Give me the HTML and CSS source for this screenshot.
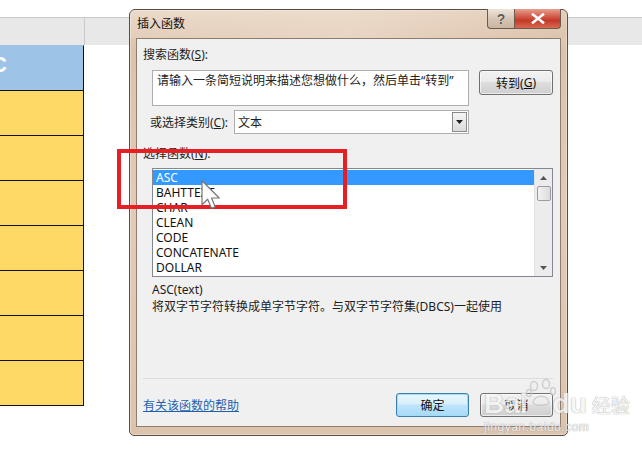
FILE: index.html
```html
<!DOCTYPE html>
<html lang="zh-CN">
<head>
<meta charset="utf-8">
<title>插入函数</title>
<link rel="stylesheet" href="styles.css">
</head>
<body>
<div class="sheet">
  <div class="colhdr"><div class="colhdr-cell"></div></div>
  <div class="cells">
    <div class="cell blue"><span class="colname">C</span></div>
    <div class="cell yellow"></div>
    <div class="cell yellow"></div>
    <div class="cell yellow"></div>
    <div class="cell yellow"></div>
    <div class="cell yellow"></div>
    <div class="cell yellow"></div>
    <div class="cell yellow"></div>
  </div>
</div>

<div class="dialog">
  <div class="titlebar">
    <span class="title">插入函数</span>
    <div class="ctrls">
      <span class="ctrl help">?</span>
      <span class="ctrl close">
        <svg width="14" height="11" viewBox="0 0 14 11"><path d="M2 1.5 L12 9.5 M12 1.5 L2 9.5" stroke="#fff" stroke-width="2.6" stroke-linecap="square"/></svg>
      </span>
    </div>
  </div>
  <div class="panel">
    <div class="lbl lbl-search">搜索函数(<u>S</u>):</div>
    <div class="search-row">
      <div class="search-box">请输入一条简短说明来描述您想做什么，然后单击“转到”</div>
      <div class="btn go">转到(<u>G</u>)</div>
    </div>
    <div class="cat-row">
      <span class="cat-lbl">或选择类别(<u>C</u>):</span>
      <div class="select"><span>文本</span><span class="drop"><svg width="7" height="4" viewBox="0 0 7 4"><path d="M0 0 H7 L3.5 4 Z" fill="#222"/></svg></span></div>
    </div>
    <div class="lbl lbl-func">选择函数(<u>N</u>):</div>
    <div class="list">
      <ul class="items">
        <li class="sel">ASC</li>
        <li>BAHTTEXT</li>
        <li>CHAR</li>
        <li>CLEAN</li>
        <li>CODE</li>
        <li>CONCATENATE</li>
        <li>DOLLAR</li>
      </ul>
      <div class="scroll">
        <div class="sarrow"><svg width="7" height="4" viewBox="0 0 7 4"><path d="M0 4 H7 L3.5 0 Z" fill="#555"/></svg></div>
        <div class="thumb"></div>
        <div class="strack"></div>
        <div class="sarrow"><svg width="7" height="4" viewBox="0 0 7 4"><path d="M0 0 H7 L3.5 4 Z" fill="#555"/></svg></div>
      </div>
    </div>
    <div class="sig">ASC(text)</div>
    <div class="desc">将双字节字符转换成单字节字符。与双字节字符集(DBCS)一起使用</div>
    <div class="sep"></div>
    <div class="footer">
      <a class="helplink" href="#">有关该函数的帮助</a>
      <div class="btns">
        <div class="btn ok">确定</div>
        <div class="btn cancel">取消</div>
      </div>
    </div>
  </div>
</div>

<div class="redbox"></div>

<svg class="cursor" width="20" height="30" viewBox="0 0 13 20">
  <path d="M0.5 0.5 L0.5 16.5 L4.3 12.8 L6.8 18.8 L9.3 17.8 L6.9 12 L12 12 Z" fill="#fff" stroke="#777" stroke-width="0.8" stroke-linejoin="round"/>
</svg>

<div class="watermark">
  <div class="wm-top"><span class="wm-bai">Bai</span><svg class="paw" width="30" height="30" viewBox="0 0 30 28"><ellipse cx="8" cy="7" rx="3.5" ry="4.5" fill="none" stroke="#c8c8c8" stroke-width="1.5"/><ellipse cx="20" cy="5" rx="3.5" ry="4.5" fill="none" stroke="#c8c8c8" stroke-width="1.5"/><ellipse cx="27" cy="12" rx="2.5" ry="3.5" fill="none" stroke="#c8c8c8" stroke-width="1.5"/><ellipse cx="3" cy="14" rx="2.5" ry="3.5" fill="none" stroke="#c8c8c8" stroke-width="1.5"/><path d="M7 24 C7 16 22 14 23 24 C20 27 10 27 7 24 Z" fill="none" stroke="#c8c8c8" stroke-width="1.5"/></svg><span class="wm-du">du</span><span class="wm-jy">经验</span></div>
  <div class="wm-url">jingyan.baidu.com</div>
</div>
</body>
</html>
```

FILE: styles.css
```css
html, body {
  margin: 0;
  padding: 0;
}
body {
  width: 642px;
  height: 449px;
  position: relative;
  overflow: hidden;
  background: #fff;
  font-family: "Noto Sans", "Noto Sans CJK SC", sans-serif;
  font-size: 12px;
  color: #1e1e1e;
}

/* spreadsheet background */
.sheet {
  padding-top: 17px;
}
.colhdr {
  height: 27px;
  background: #e8e8e8;
  border-top: 1px solid #c9c9c9;
}
.colhdr-cell {
  width: 84px;
  height: 27px;
  border-right: 1px solid #c9c9c9;
}
.cells {
  width: 84px;
}
.cell {
  height: 44px;
  border-right: 1px solid #111;
  border-bottom: 1px solid #111;
  overflow: hidden;
}
.blue {
  background: #9dc3e6;
  border-top: 1px solid #9dc3e6;
  height: 44px;
}
.yellow {
  background: #ffd966;
}
.colname {
  display: block;
  margin-left: -9px;
  margin-top: 6px;
  color: #fff;
  font-family: "Liberation Sans", sans-serif;
  font-weight: bold;
  font-size: 22px;
}

/* dialog window */
.dialog {
  position: absolute;
  left: 129px;
  top: 9px;
  width: 437px;
  height: 425px;
  border: 1px solid #5a4d44;
  border-radius: 6px 6px 5px 5px;
  background: linear-gradient(to bottom, #e9d6c4 0px, #dcc2aa 40px, #e2cbb5 200px, #dcc3ac 425px);
  box-shadow: inset 0 0 0 1px rgba(255,255,255,0.35);
}
.titlebar {
  height: 28px;
  display: flex;
  align-items: flex-start;
  justify-content: space-between;
  background: linear-gradient(to right, rgba(255,255,255,0.1), rgba(240,225,210,0.5) 50%, rgba(200,170,140,0.15));
}
.title {
  margin-left: 7px;
  margin-top: 6px;
  font-size: 12px;
  color: #111;
  line-height: 16px;
}
.ctrls {
  display: flex;
  margin-right: 6px;
  margin-top: -1px;
}
.ctrl {
  height: 19px;
  display: flex;
  align-items: center;
  justify-content: center;
  border: 1px solid #6c5a4f;
  border-top: none;
}
.help {
  width: 26px;
  border-radius: 0 0 0 4px;
  background: linear-gradient(to bottom, #efe4da, #d6c3b2 55%, #cbb5a1);
  color: #5a5a5a;
  font-family: "Liberation Sans", sans-serif;
  font-weight: bold;
  font-size: 14px;
  text-shadow: 0 0 1px #fff;
}
.close {
  width: 45px;
  border-left: none;
  border-radius: 0 0 4px 0;
  background: linear-gradient(to bottom, #e8a08e, #d0513f 45%, #c23a28 60%, #d76a52);
}

.panel {
  margin-left: 6px;
  width: 423px;
  height: 387px;
  border: 1px solid #8d7d70;
  background: #f0f0f0;
}
.lbl {
  line-height: 16px;
  margin-left: 6px;
}
.lbl-search {
  margin-top: 8px;
}
.search-row {
  margin-top: 7px;
  margin-left: 15px;
  display: flex;
  align-items: flex-start;
}
.search-box {
  width: 311px;
  border: 1px solid #aeaeae;
  background: #fff;
  padding: 2px 0 0 4px;
  box-sizing: content-box;
  height: 32px;
  line-height: 16px;
  white-space: nowrap;
  color: #222;
}
.btn {
  display: flex;
  align-items: center;
  justify-content: center;
  box-sizing: border-box;
  border: 1px solid #707070;
  border-radius: 3px;
  background: linear-gradient(to bottom, #f2f2f2 0%, #ebebeb 45%, #dddddd 50%, #cfcfcf 100%);
  color: #111;
  box-shadow: inset 0 0 0 1px rgba(255,255,255,0.6);
}
.go {
  margin-left: 10px;
  width: 74px;
  height: 25px;
}
.cat-row {
  margin-top: 4px;
  margin-left: 13px;
  display: flex;
  align-items: center;
}
.cat-lbl {
  width: 84px;
}
.select {
  width: 235px;
  height: 24px;
  box-sizing: border-box;
  border: 1px solid #aeaeae;
  background: #fff;
  display: flex;
  align-items: center;
  justify-content: space-between;
  padding-left: 3px;
}
.drop {
  width: 15px;
  height: 20px;
  margin-right: 1px;
  box-sizing: border-box;
  border: 1px solid #8a8a8a;
  background: linear-gradient(to bottom, #f4f4f4, #dcdcdc);
  display: flex;
  align-items: center;
  justify-content: center;
}
.lbl-func {
  margin-top: 12px;
}
.list {
  margin-top: 6px;
  margin-left: 15px;
  width: 401px;
  height: 109px;
  box-sizing: border-box;
  border: 1px solid #828790;
  background: #fff;
  display: flex;
}
.items {
  list-style: none;
  margin: 0;
  padding: 1px 0 0 0;
  flex: 1;
}
.items li {
  height: 15px;
  line-height: 15px;
  padding-left: 3px;
  color: #111;
  font-size: 12px;
}
.items li.sel {
  background: #3399ff;
  color: #fff;
}
.scroll {
  width: 17px;
  background: #ececec;
  border-left: 1px solid #e2e2e2;
  display: flex;
  flex-direction: column;
  align-items: center;
}
.sarrow {
  height: 17px;
  width: 17px;
  display: flex;
  align-items: center;
  justify-content: center;
}
.thumb {
  width: 14px;
  height: 15px;
  box-sizing: border-box;
  border: 1px solid #9c9c9c;
  border-radius: 2px;
  background: linear-gradient(to right, #f2f2f2, #dcdcdc);
}
.strack {
  flex: 1;
}
.sig {
  margin-top: 5px;
  margin-left: 15px;
  line-height: 16px;
}
.desc {
  margin-top: 1px;
  margin-left: 15px;
  line-height: 16px;
}
.sep {
  margin: 63px 7px 0 6px;
  height: 1px;
  background: #d8dde2;
}
.footer {
  margin: 14px 7px 0 6px;
  display: flex;
  align-items: center;
  justify-content: space-between;
}
.helplink {
  color: #1a62b0;
  text-decoration: underline;
  font-size: 12px;
}
.btns {
  display: flex;
  gap: 11px;
}
.ok, .cancel {
  width: 73px;
  height: 24px;
}
.ok {
  border-color: #3c7fb1;
  box-shadow: inset 0 0 0 1px #9fdcf5;
  background: linear-gradient(to bottom, #eaf6fd 0%, #d9f0fc 45%, #bee6fd 50%, #a7d9f5 100%);
}

/* overlays */
.redbox {
  position: absolute;
  left: 117px;
  top: 149px;
  width: 222px;
  height: 52px;
  border: 4px solid #e71f25;
}
.cursor {
  position: absolute;
  left: 201px;
  top: 180px;
}
.watermark {
  position: absolute;
  left: 484px;
  top: 378px;
  width: 158px;
  color: #f6f6f6;
  font-family: "Liberation Sans", sans-serif;
  text-shadow: 0 0 1px #a0a0a0, 0 0 1px #a0a0a0;
  opacity: 0.8;
}
.wm-top {
  display: flex;
  align-items: flex-end;
  height: 40px;
}
.wm-bai, .wm-du {
  font-size: 28px;
  font-weight: bold;
  line-height: 28px;
}
.paw {
  margin: 0 -3px 10px -2px;
}
.wm-jy {
  font-family: "Noto Sans CJK SC", sans-serif;
  font-size: 19px;
  line-height: 26px;
  margin-left: 5px;
}
.wm-url {
  margin-top: 2px;
  font-size: 12px;
  letter-spacing: 0.5px;
  color: #f0f0f0;
}
```
